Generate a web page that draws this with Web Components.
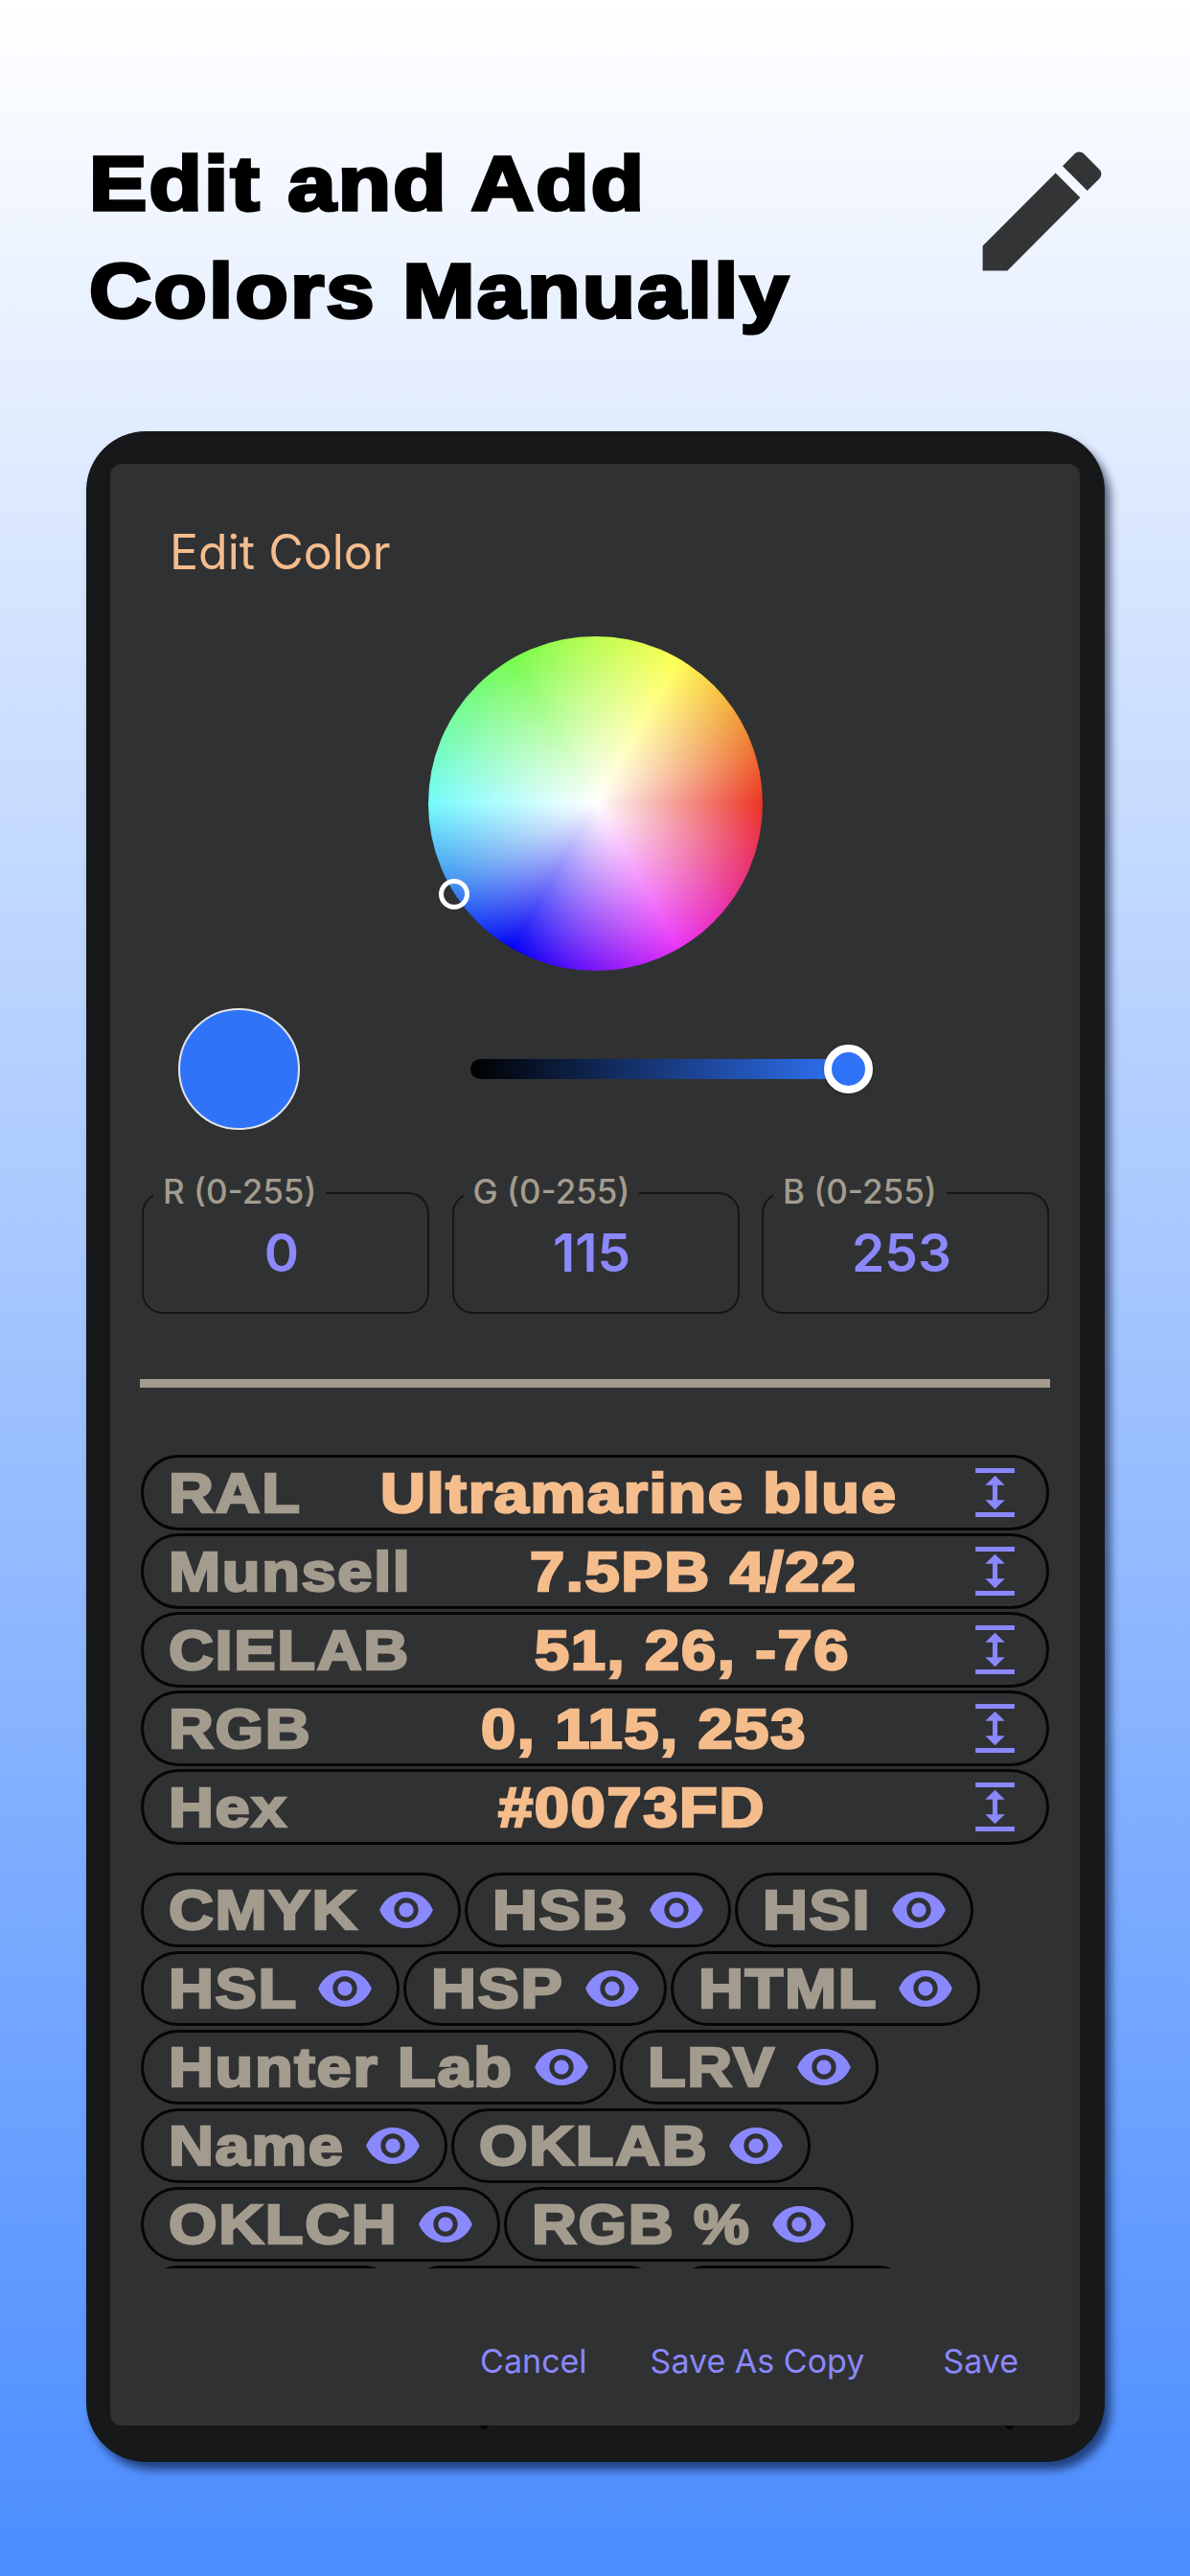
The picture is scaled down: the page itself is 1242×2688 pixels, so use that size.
<!DOCTYPE html>
<html><head><meta charset="utf-8">
<style>
html,body{margin:0;padding:0;}
body{width:1242px;height:2688px;overflow:hidden;font-family:Inter,"Liberation Sans",sans-serif;font-optical-sizing:none;}
</style></head>
<body>
<app-page>
  <hero-header slot="header">Edit and Add<br>Colors Manually</hero-header>
  <device-frame slot="device">
    <edit-dialog>
      <color-wheel></color-wheel>
      <tone-picker slot="tone"></tone-picker>
      <rgb-field slot="fields" label="R (0-255)" value="0"></rgb-field>
      <rgb-field slot="fields" label="G (0-255)" value="115"></rgb-field>
      <rgb-field slot="fields" label="B (0-255)" value="253"></rgb-field>
      <value-row slot="rows" label="RAL" value="Ultramarine blue"></value-row>
      <value-row slot="rows" label="Munsell" value="7.5PB 4/22"></value-row>
      <value-row slot="rows" label="CIELAB" value="51, 26, -76"></value-row>
      <value-row slot="rows" label="RGB" value="0, 115, 253"></value-row>
      <value-row slot="rows" label="Hex" value="#0073FD"></value-row>
      <format-chip slot="chips">CMYK</format-chip>
      <format-chip slot="chips">HSB</format-chip>
      <format-chip slot="chips">HSI</format-chip>
      <format-chip slot="chips">HSL</format-chip>
      <format-chip slot="chips">HSP</format-chip>
      <format-chip slot="chips">HTML</format-chip>
      <format-chip slot="chips">Hunter Lab</format-chip>
      <format-chip slot="chips">LRV</format-chip>
      <format-chip slot="chips">Name</format-chip>
      <format-chip slot="chips">OKLAB</format-chip>
      <format-chip slot="chips">OKLCH</format-chip>
      <format-chip slot="chips">RGB %</format-chip>
      <format-chip slot="chips" blank style="width:271px"></format-chip>
      <format-chip slot="chips" blank style="width:272px"></format-chip>
      <format-chip slot="chips" blank style="width:257px"></format-chip>
      <action-btn slot="actions">Cancel</action-btn>
      <action-btn slot="actions" style="margin-left:66px">Save As Copy</action-btn>
      <action-btn slot="actions" style="margin-left:82px">Save</action-btn>
    </edit-dialog>
  </device-frame>
</app-page>
<script>
const EYE='<svg viewBox="1 4.5 22 15" width="56" height="38" fill="#8a88fd"><path d="M12 4.5C7 4.5 2.73 7.61 1 12c1.73 4.39 6 7.5 11 7.5s9.27-3.11 11-7.5c-1.73-4.39-6-7.5-11-7.5zM12 17c-2.76 0-5-2.24-5-5s2.24-5 5-5 5 2.24 5 5-2.24 5-5 5zm0-8c-1.66 0-3 1.34-3 3s1.34 3 3 3 3-1.34 3-3-1.34-3-3-3z"/></svg>';
const EXPAND='<svg viewBox="4 2 16 20" width="41" height="51" fill="#8a88fd"><path d="M4 20h16v2H4zM4 2h16v2H4zM13 9h3l-4-4-4 4h3v6H8l4 4 4-4h-3V9z"/></svg>';
const HEAVY=`font:700 58px/1 "Liberation Sans",Arimo,sans-serif;-webkit-text-stroke:2.5px currentColor;letter-spacing:1.5px;white-space:nowrap;`;
const WIDE=`display:inline-block;transform:scaleX(1.12);transform-origin:0 50%;`;
function widen(el){el.style.marginRight=(el.getBoundingClientRect().width-el.offsetWidth)+'px';}
function def(name,html,setup){
  customElements.define(name,class extends HTMLElement{
    constructor(){super();this.attachShadow({mode:'open'}).innerHTML=html;}
    connectedCallback(){if(setup)setup(this,this.shadowRoot);}
  });
}
def('app-page',`<style>
:host{display:block;width:1242px;height:2688px;background:linear-gradient(180deg,#ffffff 0%,#4b8dff 100%);overflow:hidden}
.head{height:450px;box-sizing:border-box}
.dev{padding-left:90px}
</style><div class="head"><slot name="header"></slot></div><div class="dev"><slot name="device"></slot></div>`);
def('hero-header',`<style>
:host{display:flex;justify-content:space-between;align-items:flex-start;height:100%;box-sizing:border-box;padding:0 0 0 93px}
h1{margin:0;padding-top:136px;font:700 80px/112px "Liberation Sans",sans-serif;letter-spacing:2px;-webkit-text-stroke:3.5px #000;color:#000;transform:scaleX(1.13);transform-origin:0 0;white-space:nowrap}
svg{display:block;margin:138px 72px 0 0}
</style><h1><slot></slot></h1><svg viewBox="0 0 24 24" width="165" height="165" fill="#333436"><path d="M3 17.25V21h3.75L17.81 9.94l-3.75-3.75L3 17.25zM20.71 7.04c.39-.39.39-1.02 0-1.41l-2.34-2.34c-.39-.39-1.02-.39-1.41 0l-1.83 1.83 3.75 3.75 1.83-1.83z"/></svg>`);
def('device-frame',`<style>
:host{display:block;width:1063px;height:2119px;box-sizing:border-box;padding:34px 26px 38px 25px;background:#161819;border-radius:62px;box-shadow:6px 8px 10px rgba(0,10,40,.6);position:relative}
i{position:absolute;top:2081px;width:8px;height:4px;border-radius:0 0 4px 4px;background:#060606}
</style><slot></slot><i style="left:411px"></i><i style="left:960px"></i>`);
def('edit-dialog',`<style>
:host{display:block;height:100%;box-sizing:border-box;background:#303133;border-radius:12px;padding:0 32px;position:relative;overflow:hidden;color:#a39c8e}
h2{margin:0;padding:68px 0 0 30px;height:180px;box-sizing:border-box;font:400 50px/48px Inter,sans-serif;font-optical-sizing:none;color:#f5bd8c}
.wheel{display:flex;justify-content:center}
.fields{display:grid;grid-template-columns:repeat(3,300px);column-gap:23.5px;margin-top:65px;padding-left:1px}
hr{border:0;height:9px;background:#a39c8e;margin:68px -1px 0 -1px}
.rows{display:flex;flex-direction:column;gap:3px;margin-top:70px}
.clip{height:413px;margin-top:29px;overflow:hidden}
.chips{display:flex;flex-wrap:wrap;gap:4px 4px;align-content:flex-start}
.actions{position:absolute;left:0;right:0;bottom:47px;display:flex;justify-content:flex-end;padding-right:64px}
</style>
<h2>Edit Color</h2>
<div class="wheel"><slot></slot></div>
<slot name="tone"></slot>
<div class="fields"><slot name="fields"></slot></div>
<hr>
<div class="rows"><slot name="rows"></slot></div>
<div class="clip"><div class="chips"><slot name="chips"></slot></div></div>
<div class="actions"><slot name="actions"></slot></div>`);
def('color-wheel',`<style>
:host{display:block;width:349px;height:349px;position:relative}
.w{width:100%;height:100%;border-radius:50%;background:radial-gradient(closest-side,#fff 0%,rgba(255,255,255,0) 100%),conic-gradient(from 90deg,#eb3323 0deg,#ea3388 30deg,#ea33f7 60deg,#7a14f7 90deg,#0000f5 120deg,#3e8cf0 150deg,#75fbfd 180deg,#75fb9e 210deg,#75fb4c 240deg,#bcfc4f 270deg,#ffff54 300deg,#f19a38 330deg,#eb3323 360deg)}
.p{position:absolute;left:11px;top:253px;width:32px;height:32px;box-sizing:border-box;border:5px solid #fff;border-radius:50%}
</style><div class="w"></div><div class="p"></div>`);
def('tone-picker',`<style>
:host{display:flex;align-items:center;height:128px;margin-top:38px;position:relative}
.s{width:127px;height:127px;box-sizing:border-box;border:2px solid #e4e4e4;border-radius:50%;background:#2f73f8;margin-left:39px;flex:none}
.t{margin-left:178px;width:395px;height:21px;position:relative;border-radius:11px 0 0 11px;background:linear-gradient(90deg,#000,#2f73f8)}
.k{position:absolute;right:-25px;top:-15px;width:51px;height:51px;box-sizing:border-box;border:8px solid #fff;border-radius:50%;background:#2f73f8;box-shadow:0 1px 3px rgba(0,0,0,.35)}
</style><div class="s"></div><div class="t"><div class="k"></div></div>`);
def('rgb-field',`<style>
:host{display:block;position:relative;height:127px;box-sizing:border-box;border:2.5px solid #141516;border-radius:22px;color:#8a88fa;font-optical-sizing:none}
.l{position:absolute;left:10px;top:-20px;padding:0 10px;background:#303133;font:500 35px/34px Inter,sans-serif;color:#a39c8e}
.v{height:100%;display:flex;align-items:center;justify-content:center;padding-right:8px;box-sizing:border-box;font:600 55px/1 Inter,sans-serif}
</style><div class="l"></div><div class="v"></div>`,(h,s)=>{s.querySelector('.l').textContent=h.getAttribute('label');s.querySelector('.v').textContent=h.getAttribute('value');});
def('value-row',`<style>
:host{display:flex;align-items:center;justify-content:space-between;height:79px;box-sizing:border-box;border:3px solid #050505;border-radius:40px;padding:0 33px 0 26px;${HEAVY}}
.l{color:#a39c8e;${WIDE}}.v{color:#f5bd8c;${WIDE}}svg{display:block}
</style><span class="l"></span><span class="v"></span>${EXPAND}`,(h,s)=>{const l=s.querySelector('.l'),v=s.querySelector('.v');l.textContent=h.getAttribute('label');v.textContent=h.getAttribute('value');widen(l);widen(v);});
def('format-chip',`<style>
:host{display:inline-flex;align-items:center;height:78px;box-sizing:border-box;border:3px solid #050505;border-radius:40px;padding:0 26px 0 26px;gap:22px;color:#a39c8e;${HEAVY}}
.t{${WIDE}}
:host([blank]) svg{display:none}
svg{display:block}
</style><span class="t"><slot></slot></span>${EYE}`,(h,s)=>widen(s.querySelector('.t')));
def('action-btn',`<style>
:host{display:block;font:400 34px/40px Inter,sans-serif;font-optical-sizing:none;color:#8a88fa;white-space:nowrap}
</style><slot></slot>`);
</script>
</body></html>
